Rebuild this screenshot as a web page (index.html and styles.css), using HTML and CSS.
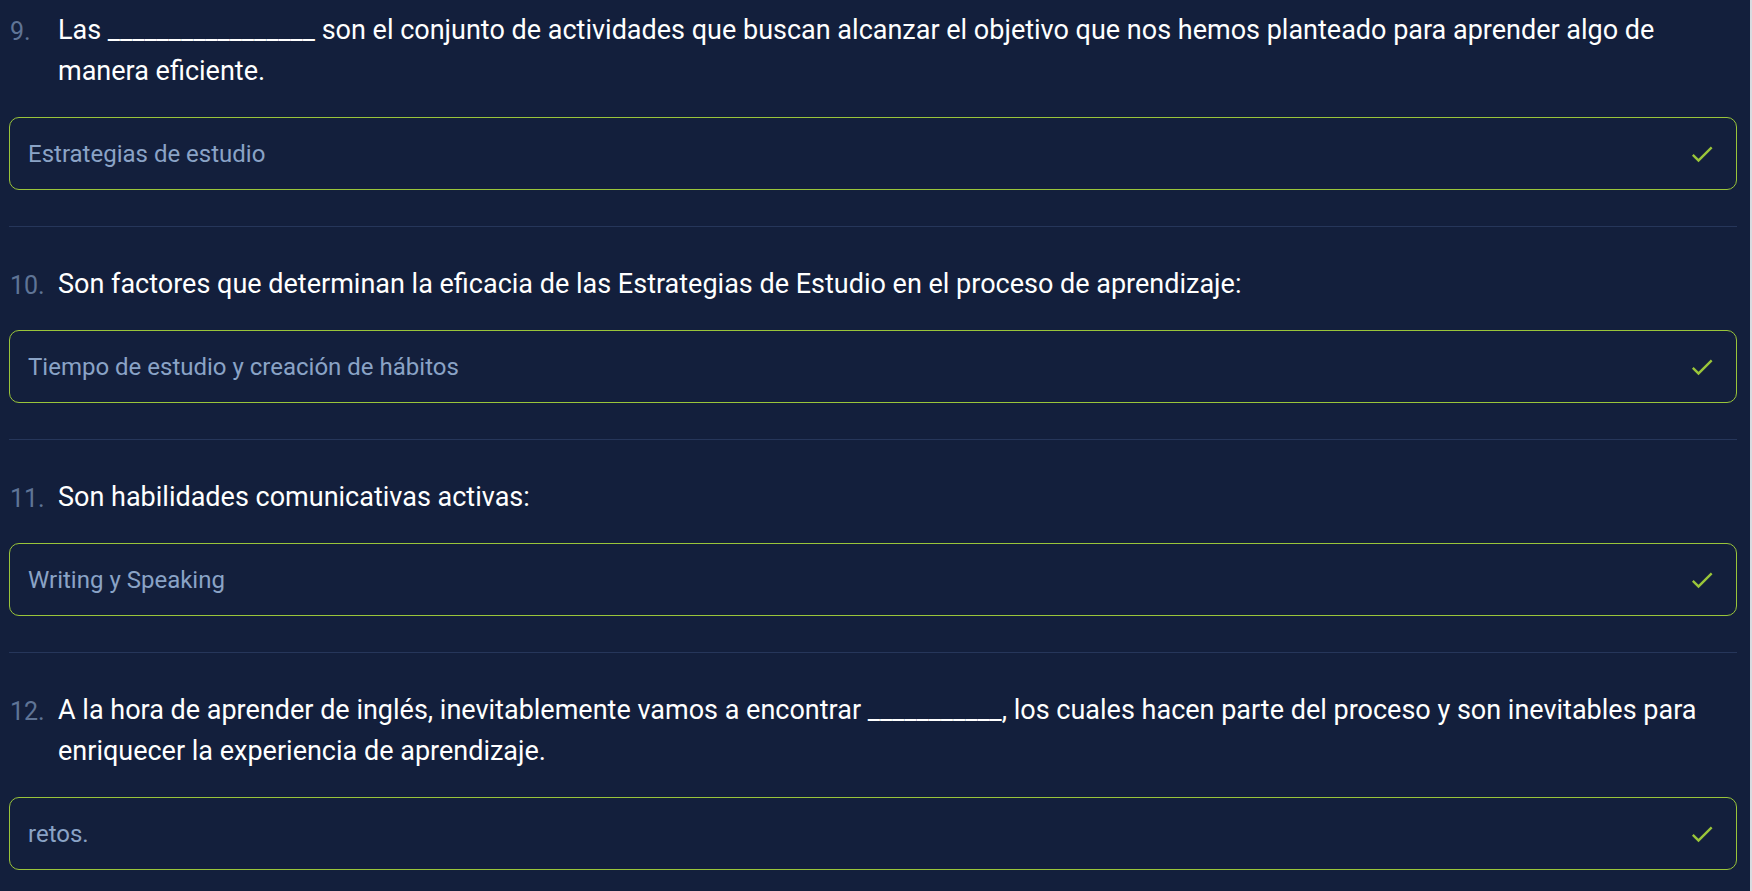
FILE: index.html
```html
<!DOCTYPE html>
<html lang="es">
<head>
<meta charset="utf-8">
<title>Cuestionario</title>
<link rel="stylesheet" href="styles.css">
</head>
<body>
<div class="quiz">
  <section class="item">
    <div class="question">
      <span class="num">9.</span>
      <p class="text">Las _________________ son el conjunto de actividades que buscan alcanzar el objetivo que nos hemos planteado para aprender algo de manera eficiente.</p>
    </div>
    <div class="answer">
      <span class="answer-text">Estrategias de estudio</span>
      <svg class="check" viewBox="0 0 24 24" width="28" height="28"><path d="M9 16.17L4.83 12l-1.42 1.41L9 19 21 7l-1.41-1.41z"/></svg>
    </div>
  </section>
  <section class="item">
    <div class="question">
      <span class="num">10.</span>
      <p class="text">Son factores que determinan la eficacia de las Estrategias de Estudio en el proceso de aprendizaje:</p>
    </div>
    <div class="answer">
      <span class="answer-text">Tiempo de estudio y creación de hábitos</span>
      <svg class="check" viewBox="0 0 24 24" width="28" height="28"><path d="M9 16.17L4.83 12l-1.42 1.41L9 19 21 7l-1.41-1.41z"/></svg>
    </div>
  </section>
  <section class="item">
    <div class="question">
      <span class="num">11.</span>
      <p class="text">Son habilidades comunicativas activas:</p>
    </div>
    <div class="answer">
      <span class="answer-text">Writing y Speaking</span>
      <svg class="check" viewBox="0 0 24 24" width="28" height="28"><path d="M9 16.17L4.83 12l-1.42 1.41L9 19 21 7l-1.41-1.41z"/></svg>
    </div>
  </section>
  <section class="item">
    <div class="question">
      <span class="num">12.</span>
      <p class="text">A la hora de aprender de inglés, inevitablemente vamos a encontrar ___________, los cuales hacen parte del proceso y son inevitables para enriquecer la experiencia de aprendizaje.</p>
    </div>
    <div class="answer">
      <span class="answer-text">retos.</span>
      <svg class="check" viewBox="0 0 24 24" width="28" height="28"><path d="M9 16.17L4.83 12l-1.42 1.41L9 19 21 7l-1.41-1.41z"/></svg>
    </div>
  </section>
</div>
</body>
</html>
```

FILE: styles.css
```css
html, body {
  margin: 0;
  padding: 0;
  height: 100%;
  overflow: hidden;
}

body {
  background: #131f3c;
  font-family: Roboto, "Liberation Sans", Arial, sans-serif;
  color: #ffffff;
  border-right: 2px solid #d9dbe0;
  box-sizing: border-box;
}

.quiz {
  margin-top: -27px;
  padding: 0 13px 0 9px;
}

.item {
  padding: 37px 0 36px;
  border-bottom: 1px solid #26365a;
}

.question {
  display: flex;
  align-items: baseline;
  margin-bottom: 25px;
}

.num {
  flex: 0 0 48px;
  padding-left: 1px;
  font-size: 25px;
  font-weight: 400;
  line-height: 41px;
  color: #5f7496;
  position: relative;
  top: 1px;
}

.text {
  margin: 0;
  font-size: 27px;
  line-height: 41px;
  color: #ffffff;
}

.answer {
  display: flex;
  align-items: center;
  justify-content: space-between;
  height: 73px;
  box-sizing: border-box;
  border: 1px solid #9ac53a;
  border-radius: 10px;
  padding: 0 20px 0 18px;
}

.answer-text {
  font-size: 24px;
  color: #8aa3c6;
}

.check {
  fill: #9ac53a;
  display: block;
}
```
